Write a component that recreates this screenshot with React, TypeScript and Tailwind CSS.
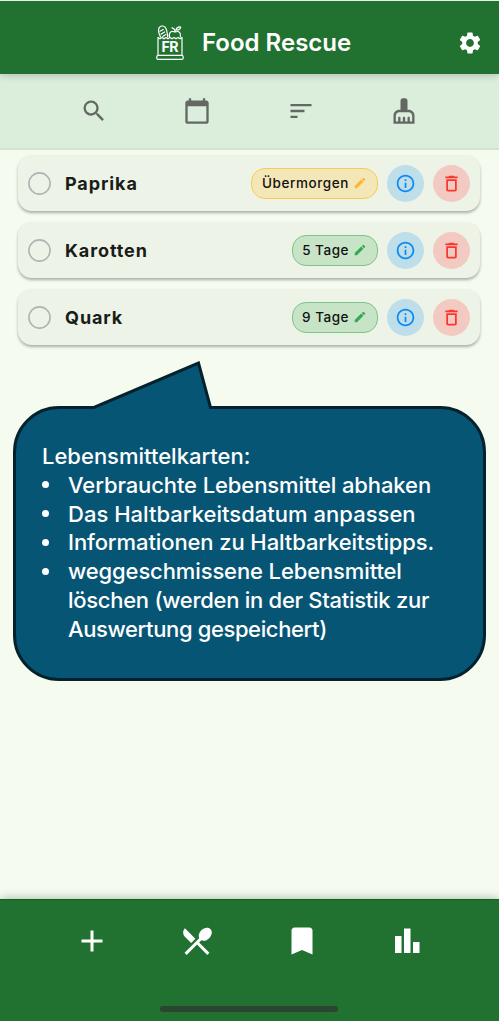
import type { ReactNode } from "react";
import {
  MdSearch,
  MdCalendarToday,
  MdSort,
  MdSettings,
  MdEdit,
  MdInfoOutline,
  MdDeleteOutline,
  MdAdd,
  MdLocalDining,
  MdBookmark,
} from "react-icons/md";

function Logo() {
  return (
    <svg width="28" height="36" viewBox="0 0 28 36" fill="none" stroke="white" strokeWidth="1.2" strokeLinecap="round" strokeLinejoin="round">
      <path d="M2 13V30M26 13V30" />
      <path d="M2 12.5l2 1.3 2-1.3 2 1.3 2-1.3 2 1.3 2-1.3 2 1.3 2-1.3 2 1.3 2-1.3 2 1.3 2-1.3" />
      <rect x="0.8" y="30.4" width="26.4" height="4" rx="1.5" />
      <path d="M4.5 12C2.5 8 2 4 3.6 2.2C5.4.3 8.5.7 9.7 3C10.8 5 11.4 9 11.7 12" />
      <path d="M4 6.2L7.2 4.5M5 9.2L8.6 7M6.8 11.4L9.8 9.6" />
      <path d="M13.6 12C12.6 8.5 14.4 6 17 6.5C18.3 6.8 19.2 7.2 20.2 6.7C23.2 5.8 25.2 8.5 24.3 12" />
      <path d="M19.2 6.5C19 4.5 17.8 3.2 16 2.8M20 5C20.5 3 22.2 1.8 24.7 2C24.5 4.2 22.5 5.6 20 5" />
      <text x="14" y="27" textAnchor="middle" fontFamily="Roboto, sans-serif" fontSize="14.5" fontWeight="700" fill="white" stroke="none">FR</text>
    </svg>
  );
}

function Broom() {
  return (
    <svg width="28" height="28" viewBox="0 0 24 24" fill="currentColor">
      <path d="M16 11h-1V3c0-1.1-.9-2-2-2h-2c-1.1 0-2 .9-2 2v8H8c-2.76 0-5 2.24-5 5v7h18v-7c0-2.76-2.24-5-5-5zm3 10h-2v-3c0-.55-.45-1-1-1s-1 .45-1 1v3h-2v-3c0-.55-.45-1-1-1s-1 .45-1 1v3H9v-3c0-.55-.45-1-1-1s-1 .45-1 1v3H5v-5c0-1.65 1.35-3 3-3h8c1.65 0 3 1.35 3 3v5z" />
    </svg>
  );
}

function Bars() {
  return (
    <svg width="32" height="32" viewBox="0 0 32 32" fill="currentColor">
      <path d="M4 11h6.500v17H4zM13 3.500h6.500v24.500H13zM22 17h6.500v11H22z" />
    </svg>
  );
}

function Tool({ children }: { children: ReactNode }) {
  return <button className="flex flex-1 items-center justify-center">{children}</button>;
}

const items = [
  { name: "Paprika", due: "Übermorgen", soon: true },
  { name: "Karotten", due: "5 Tage", soon: false },
  { name: "Quark", due: "9 Tage", soon: false },
];

function FoodCard({ name, due, soon }: { name: string; due: string; soon: boolean }) {
  return (
    <li className="flex h-14 items-center rounded-[14px] bg-[#eef3e8] pr-[10px] pl-[10px] shadow-[0_2px_3px_rgba(0,0,0,0.3)]">
      <svg width="23" height="23" viewBox="0 0 23 23" fill="none">
        <circle cx="11.5" cy="11.5" r="10.6" stroke="#b1b3b1" strokeWidth="1.6" />
      </svg>
      <span className="ml-[14px] flex-1 text-[18px] font-bold tracking-[0.9px] text-[#191d18]">{name}</span>
      <span
        className={
          soon
            ? "flex h-[31px] items-center gap-[4px] rounded-[14px] border border-[#f9cb54] bg-[#f3e7b7] pr-[10px] pl-[10px] text-[13.500px] font-medium tracking-[0.58px] text-[#111]"
            : "flex h-[31px] items-center gap-[4px] rounded-[14px] border border-[#7bc586] bg-[#c8e4c7] pr-[10px] pl-[9px] text-[13.500px] font-medium tracking-[0.52px] text-[#111]"
        }
      >
        {due}
        <MdEdit size={14} className={soon ? "text-[#fbb62e]" : "text-[#34a853]"} />
      </span>
      <span className="ml-[9px] flex size-[37px] items-center justify-center rounded-full bg-[#bedeea] text-[#0c8cf3]">
        <MdInfoOutline size={21} />
      </span>
      <span className="ml-[9px] flex size-[37px] items-center justify-center rounded-full bg-[#f2cac1] text-[#fa372f]">
        <MdDeleteOutline size={21} />
      </span>
    </li>
  );
}

function Bullet() {
  return (
    <span className="flex h-[28px] w-[26px] shrink-0 items-center">
      <span className="size-[7px] rounded-full bg-white" />
    </span>
  );
}

function Callout() {
  return (
    <section className="relative mx-[13px] mt-[61px] h-[275px] w-[473px] rounded-[46px] border-[3px] border-[#04222e] bg-[#075574] pt-[33px] pl-[26px] text-[22px] leading-[28.800px] font-medium whitespace-nowrap text-white">
      <svg className="absolute -top-[48px] left-[70px]" width="130" height="52" viewBox="0 0 130 52">
        <path d="M7 50L8 46.500L112.500 2L125 46.500V50Z" fill="#075574" />
        <path d="M4 46.500H8L112.500 2L124.500 46.500H128" fill="none" stroke="#04222e" strokeWidth="3" />
      </svg>
      <p>Lebensmittelkarten:</p>
      <ul className="list-none">
        <li className="flex"><Bullet /><span className="tracking-[-0.1px]">Verbrauchte Lebensmittel abhaken</span></li>
        <li className="flex"><Bullet /><span className="tracking-[0.02px]">Das Haltbarkeitsdatum anpassen</span></li>
        <li className="flex"><Bullet /><span className="tracking-[-0.1px]">Informationen zu Haltbarkeitstipps.</span></li>
        <li className="flex">
          <Bullet />
          <span>
            <span className="tracking-[-0.12px]">weggeschmissene Lebensmittel</span><br />
            <span className="tracking-[-0.28px]">löschen (werden in der Statistik zur</span><br />
            <span className="tracking-[-0.38px]">Auswertung gespeichert)</span>
          </span>
        </li>
      </ul>
    </section>
  );
}

export default function App() {
  return (
    <div className="flex h-[1021px] w-[499px] flex-col overflow-hidden bg-[#f5fbef] font-['Inter',sans-serif]">
      <header className="relative z-10 flex h-[74px] shrink-0 items-center border-t border-[#e9f2e9] bg-[#217230] pt-[10px] pr-[16px] pl-[156px] text-white shadow-[0_1px_8px_rgba(0,0,0,0.22)]">
        <Logo />
        <h1 className="ml-[18px] flex-1 text-[24px] font-semibold whitespace-nowrap">Food Rescue</h1>
        <MdSettings size={26} />
      </header>
      <nav className="flex h-[76px] shrink-0 border-b-2 border-[#cfe6d1] bg-[#daeedb] pr-[43px] pl-[42px] text-[#656765]">
        <Tool><MdSearch size={28} /></Tool>
        <Tool><MdCalendarToday size={28} /></Tool>
        <Tool><MdSort size={28} /></Tool>
        <Tool><Broom /></Tool>
      </nav>
      <main className="min-h-0 flex-1 pt-[5px]">
        <ul className="mr-[19px] ml-[18px] flex flex-col gap-[11px]">
          {items.map((item) => <FoodCard key={item.name} {...item} />)}
        </ul>
        <Callout />
      </main>
      <footer className="relative flex h-[122px] shrink-0 flex-col items-center border-t border-[#0c6520] bg-[#217230] pr-px shadow-[0_-1px_9px_rgba(0,0,0,0.25)]">
        <div className="flex h-[82px] w-[420px] items-center text-white">
          <Tool><MdAdd size={36} /></Tool>
          <Tool><MdLocalDining size={36} /></Tool>
          <Tool><MdBookmark size={36} /></Tool>
          <Tool><Bars /></Tool>
        </div>
        <div className="mt-[24px] h-[6px] w-[178px] rounded-full bg-[#2b4530]" />
      </footer>
    </div>
  );
}
